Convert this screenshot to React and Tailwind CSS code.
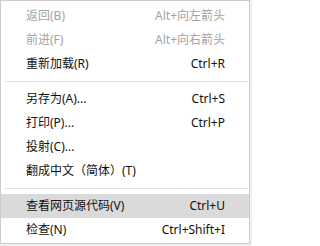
import React from "react";

const font = { fontFamily: '"Noto Sans", "Noto Sans CJK SC", sans-serif' };

function Row({ label, shortcut, disabled, active }) {
  return (
    <div
      className={
        "flex h-[24px] items-center justify-between pl-[25px] pr-[24px] text-[12px] " +
        (disabled ? "text-[#a3a3a3] " : "text-[#111111] ") +
        (active ? "bg-[#dadada]" : "")
      }
    >
      <span>{label}</span>
      {shortcut ? <span>{shortcut}</span> : null}
    </div>
  );
}

function Sep() {
  return <div className="my-[5px] ml-[3px] h-px bg-[#e4e4e4]" />;
}

export default function App() {
  return (
    <div className="h-[246px] w-[252px] bg-[#f0f0f0]" style={font}>
      <div className="h-[244px] w-[250px] border border-[#cdcdcd] bg-white pt-[3px] pb-px leading-none">
        <Row label="返回(B)" shortcut="Alt+向左箭头" disabled />
        <Row label="前进(F)" shortcut="Alt+向右箭头" disabled />
        <Row label="重新加载(R)" shortcut="Ctrl+R" />
        <Sep />
        <Row label="另存为(A)..." shortcut="Ctrl+S" />
        <Row label="打印(P)..." shortcut="Ctrl+P" />
        <Row label="投射(C)..." />
        <Row label="翻成中文（简体）(T)" />
        <Sep />
        <Row label="查看网页源代码(V)" shortcut="Ctrl+U" active />
        <Row label="检查(N)" shortcut="Ctrl+Shift+I" />
      </div>
    </div>
  );
}
